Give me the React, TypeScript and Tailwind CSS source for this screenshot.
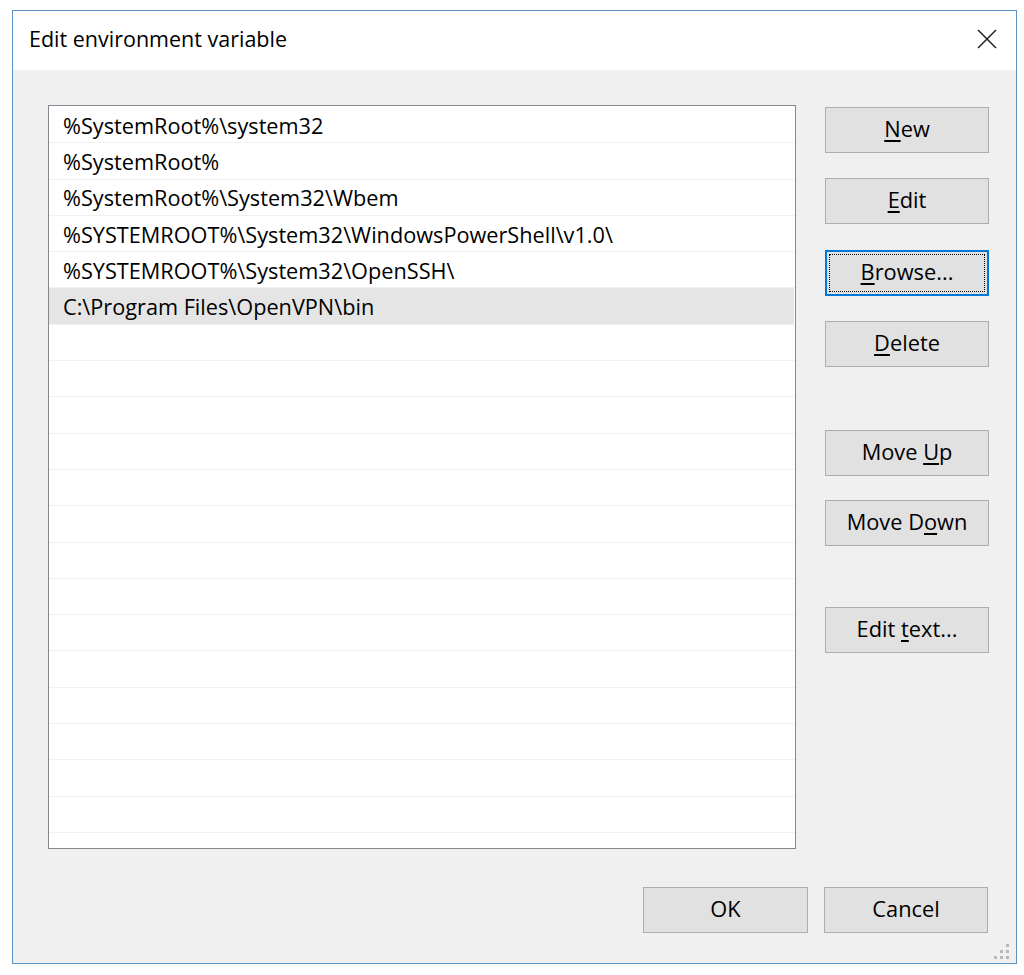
const PATHS = [
  "%SystemRoot%\\system32",
  "%SystemRoot%",
  "%SystemRoot%\\System32\\Wbem",
  "%SYSTEMROOT%\\System32\\WindowsPowerShell\\v1.0\\",
  "%SYSTEMROOT%\\System32\\OpenSSH\\",
  "C:\\Program Files\\OpenVPN\\bin",
];

const SELECTED = 5;
const ROW_COUNT = 21;

function Btn({
  label,
  hotkey,
  focused,
  className = "",
}: {
  label: string;
  hotkey?: number;
  focused?: boolean;
  className?: string;
}) {
  const text =
    hotkey === undefined ? (
      label
    ) : (
      <>
        {label.slice(0, hotkey)}
        <span className="underline underline-offset-[3px]">{label[hotkey]}</span>
        {label.slice(hotkey + 1)}
      </>
    );
  return (
    <button
      className={`relative flex h-[46px] w-[164px] items-center justify-center bg-[#e1e1e1] text-[21.8px] text-black ${
        focused ? "border-2 border-[#0078d7]" : "border border-[#adadad]"
      } ${className}`}
    >
      {focused && <span className="absolute inset-[2px] border border-dotted border-black" />}
      <span className="pb-[2px]">{text}</span>
    </button>
  );
}

export default function App() {
  return (
    <div
      className="h-[975px] w-[1024px] bg-white pl-[12px] pt-[10px]"
      style={{ fontFamily: '"Open Sans", "Noto Sans", sans-serif' }}
    >
      <div className="flex h-[954px] w-[1005px] flex-col border border-[#5b93c7]">
        {/* title bar */}
        <div className="flex h-[59px] shrink-0 items-center justify-between bg-white pl-[16px] pr-[19px]">
          <span className="pb-[2px] text-[21.5px] text-black">Edit environment variable</span>
          <svg width="20" height="20" viewBox="0 0 20 20" className="mb-[4px]">
            <path d="M1 1 L19 19 M19 1 L1 19" stroke="#222" strokeWidth="1.5" fill="none" />
          </svg>
        </div>

        {/* client */}
        <div className="relative flex flex-1 flex-col bg-[#f0f0f0] pl-[35px] pt-[35px]">
          <div className="flex">
            <div className="h-[744px] w-[748px] overflow-hidden border border-[#828790] bg-white pt-[1px]">
              {Array.from({ length: ROW_COUNT }).map((_, i) => (
                <div
                  key={i}
                  className={`flex h-[36.3px] items-center border-b border-[#f0f0f0] pl-[14px] text-[21.7px] text-black ${
                    i === SELECTED ? "mr-[1px] bg-[#e5e5e5]" : ""
                  }`}
                >
                  <span className="pt-[3px]">{PATHS[i] ?? ""}</span>
                </div>
              ))}
            </div>

            <div className="ml-[29px] flex flex-col pt-[2px]">
              <Btn label="New" hotkey={0} />
              <Btn label="Edit" hotkey={0} className="mt-[25px]" />
              <Btn label="Browse..." hotkey={0} focused className="mt-[26px]" />
              <Btn label="Delete" hotkey={0} className="mt-[25px]" />
              <Btn label="Move Up" hotkey={5} className="mt-[63px]" />
              <Btn label="Move Down" hotkey={6} className="mt-[24px]" />
              <Btn label="Edit text..." hotkey={5} className="mt-[61px]" />
            </div>
          </div>

          <div className="mt-[38px] flex justify-end gap-[16px] pr-[28px]">
            <Btn label="OK" className="w-[165px]" />
            <Btn label="Cancel" />
          </div>

          {/* size grip */}
          <svg width="18" height="18" viewBox="0 0 18 18" className="absolute bottom-[3px] right-[6px]">
            {[
              [14, 2],
              [14, 8],
              [8, 8],
              [14, 14],
              [8, 14],
              [2, 14],
            ].map(([x, y]) => (
              <rect key={`${x}-${y}`} x={x} y={y} width="3" height="3" fill="#b8b8b8" />
            ))}
          </svg>
        </div>
      </div>
    </div>
  );
}
